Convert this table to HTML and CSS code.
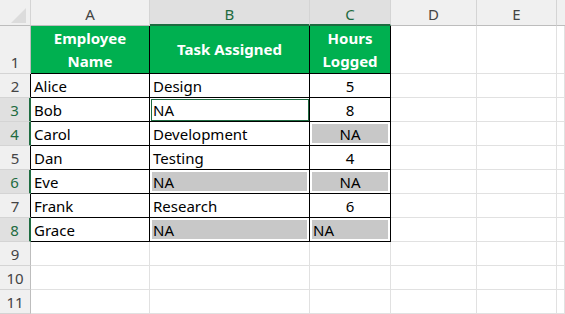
FILE: index.html
```html
<!DOCTYPE html>
<html>
<head>
<meta charset="utf-8">
<link rel="stylesheet" href="styles.css">
</head>
<body>
<div class="sheet">
  <div class="corner"><svg width="31" height="26" viewBox="0 0 31 26"><polygon points="11,23 26,23 26,8" fill="#dcdcdc"/></svg></div>
  <div class="ch">A</div>
  <div class="ch sel">B</div>
  <div class="ch sel">C</div>
  <div class="ch">D</div>
  <div class="ch">E</div>
  <div class="ch last"></div>

  <div class="rh first">1</div>
  <div class="c t hd">Employee<br>Name</div>
  <div class="c t hd">Task Assigned</div>
  <div class="c t hd">Hours<br>Logged</div>
  <div class="c"></div><div class="c"></div><div class="c"></div>

  <div class="rh in">2</div>
  <div class="c t">Alice</div>
  <div class="c t">Design</div>
  <div class="c t num">5</div>
  <div class="c"></div><div class="c"></div><div class="c"></div>

  <div class="rh in sel">3</div>
  <div class="c t">Bob</div>
  <div class="c t active">NA</div>
  <div class="c t num">8</div>
  <div class="c"></div><div class="c"></div><div class="c"></div>

  <div class="rh in sel">4</div>
  <div class="c t">Carol</div>
  <div class="c t">Development</div>
  <div class="c t num fill">NA</div>
  <div class="c"></div><div class="c"></div><div class="c"></div>

  <div class="rh in">5</div>
  <div class="c t">Dan</div>
  <div class="c t">Testing</div>
  <div class="c t num">4</div>
  <div class="c"></div><div class="c"></div><div class="c"></div>

  <div class="rh in sel">6</div>
  <div class="c t">Eve</div>
  <div class="c t fill">NA</div>
  <div class="c t num fill">NA</div>
  <div class="c"></div><div class="c"></div><div class="c"></div>

  <div class="rh in">7</div>
  <div class="c t">Frank</div>
  <div class="c t">Research</div>
  <div class="c t num">6</div>
  <div class="c"></div><div class="c"></div><div class="c"></div>

  <div class="rh in sel">8</div>
  <div class="c t">Grace</div>
  <div class="c t fill">NA</div>
  <div class="c t fill">NA</div>
  <div class="c"></div><div class="c"></div><div class="c"></div>

  <div class="rh">9</div>
  <div class="c"></div><div class="c"></div><div class="c"></div><div class="c"></div><div class="c"></div><div class="c"></div>

  <div class="rh">10</div>
  <div class="c"></div><div class="c"></div><div class="c"></div><div class="c"></div><div class="c"></div><div class="c"></div>

  <div class="rh">11</div>
  <div class="c"></div><div class="c"></div><div class="c"></div><div class="c"></div><div class="c"></div><div class="c"></div>
</div>
</body>
</html>
```
FILE: styles.css
```css
* { box-sizing: border-box; }
html, body { margin: 0; padding: 0; background: #fff; }
body { font-family: "Noto Sans", "Liberation Sans", sans-serif; font-size: 15px; line-height: 18px; color: #000; }

.sheet {
  display: grid;
  grid-template-columns: 31px 119px 160px 81px 86px 80px 1fr;
  grid-template-rows: 26px 48px repeat(10, 24px);
  width: 565px;
  height: 314px;
  overflow: hidden;
}

.corner {
  background: #f0f0f0;
  border-right: 1px solid #d4d4d4;
  border-bottom: 1px solid #bdbdbd;
}
.corner svg { display: block; }

.ch {
  background: #f0f0f0;
  border-right: 1px solid #d4d4d4;
  border-bottom: 1px solid #bdbdbd;
  display: flex;
  align-items: center;
  justify-content: center;
  padding-top: 3px;
  color: #444;
}
.ch.last { border-right: none; }
.ch.sel {
  background: #e0e0e0;
  color: #1e6b40;
  border-bottom: 2px solid #1e6b40;
  padding-top: 4px;
}

.rh {
  background: #f0f0f0;
  border-right: 1px solid #bdbdbd;
  border-bottom: 1px solid #d4d4d4;
  display: flex;
  align-items: flex-end;
  justify-content: center;
  padding-bottom: 2px;
  color: #444;
}
.rh.in { border-right-color: #000; }
.rh.sel {
  background: #e0e0e0;
  color: #1e6b40;
  border-right: 2px solid #1e6b40;
}

.c {
  border-right: 1px solid #e1e1e1;
  border-bottom: 1px solid #e1e1e1;
  display: flex;
  align-items: flex-end;
  padding: 0 3px 2px 3px;
  white-space: nowrap;
  overflow: hidden;
}
.c.t {
  border-right-color: #000;
  border-bottom-color: #000;
}
.c.hd {
  background: #00b050;
  color: #fff;
  font-weight: bold;
  align-items: center;
  justify-content: center;
  text-align: center;
  line-height: 23px;
  padding: 0;
}
.c.num { justify-content: center; }
.c.fill {
  background: #c8c8c8;
  box-shadow: inset 0 0 0 2px #fff;
}
.c.active {
  outline: 1px solid #1e6b40;
  outline-offset: -2px;
}
```
